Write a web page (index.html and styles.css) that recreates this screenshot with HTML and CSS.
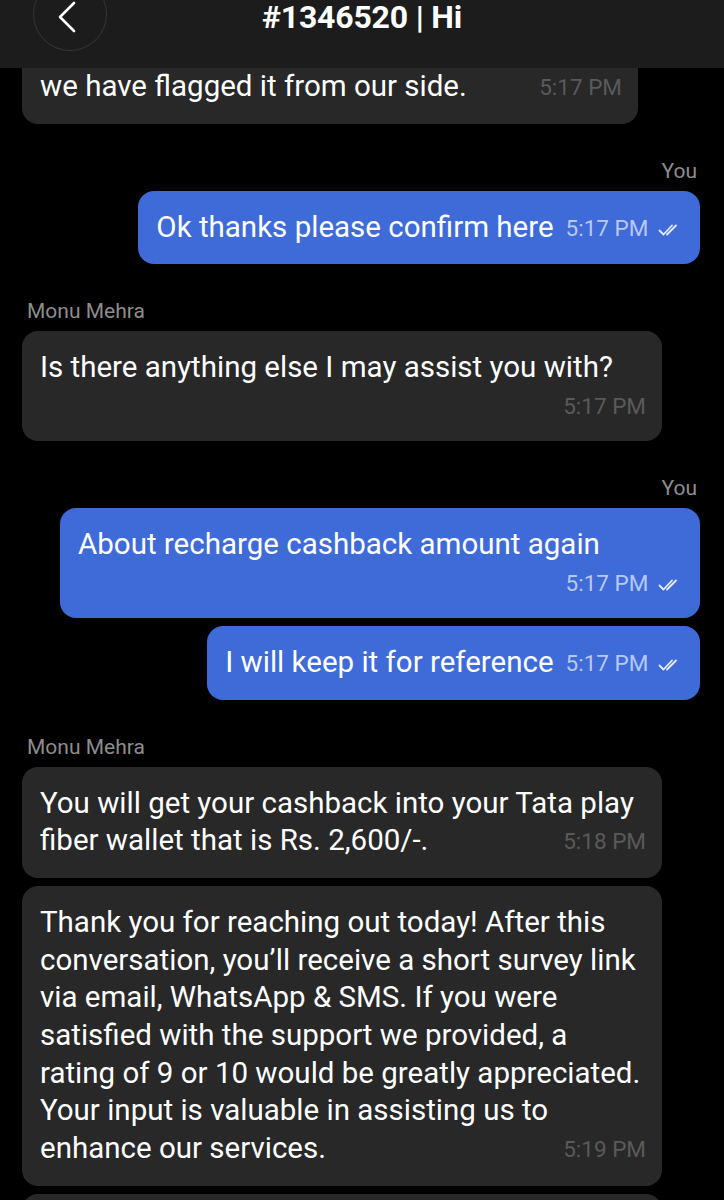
FILE: index.html
```html
<!DOCTYPE html>
<html lang="en">

<head>
    <meta charset="UTF-8">
    <meta name="viewport" content="width=device-width, initial-scale=1.0">
    <title>#1346520 | Hi</title>
    <link rel="stylesheet" href="styles.css">
</head>

<body>
    <header class="top-bar">
        <button class="back-btn" aria-label="Back">
            <svg width="20" height="32" viewBox="0 0 20 32">
                <path d="M17 2 L3 16 L17 30" fill="none" stroke="#fff" stroke-width="2.6" stroke-linecap="round" stroke-linejoin="round" />
            </svg>
        </button>
        <h1 class="title">#1346520 | Hi</h1>
    </header>

    <main class="chat">
        <div class="group group-them">
            <div class="bubble bubble-them bubble-cut">we have flagged it from our side.<span class="meta">5:17 PM</span></div>
        </div>

        <div class="group group-me">
            <div class="sender">You</div>
            <div class="bubble bubble-me">Ok thanks please confirm here<span class="meta">5:17 PM <svg class="ticks" width="24" height="14" viewBox="0 0 24 14"><path d="M1.5 7.5 L5.5 11.5 L14 2.5 M9 11.5 L18 2.5" fill="none" stroke="currentColor" stroke-width="1.8" stroke-linecap="round" stroke-linejoin="round" /></svg></span></div>
        </div>

        <div class="group group-them">
            <div class="sender">Monu Mehra</div>
            <div class="bubble bubble-them">Is there anything else I may assist you with?<span class="meta">5:17 PM</span></div>
        </div>

        <div class="group group-me">
            <div class="sender">You</div>
            <div class="bubble bubble-me">About recharge cashback amount again<span class="meta">5:17 PM <svg class="ticks" width="24" height="14" viewBox="0 0 24 14"><path d="M1.5 7.5 L5.5 11.5 L14 2.5 M9 11.5 L18 2.5" fill="none" stroke="currentColor" stroke-width="1.8" stroke-linecap="round" stroke-linejoin="round" /></svg></span></div>
            <div class="bubble bubble-me">I will keep it for reference<span class="meta">5:17 PM <svg class="ticks" width="24" height="14" viewBox="0 0 24 14"><path d="M1.5 7.5 L5.5 11.5 L14 2.5 M9 11.5 L18 2.5" fill="none" stroke="currentColor" stroke-width="1.8" stroke-linecap="round" stroke-linejoin="round" /></svg></span></div>
        </div>

        <div class="group group-them">
            <div class="sender">Monu Mehra</div>
            <div class="bubble bubble-them">You will get your cashback into your Tata play fiber wallet that is Rs. 2,600/-.<span class="meta">5:18 PM</span></div>
            <div class="bubble bubble-them">Thank you for reaching out today! After this conversation, you’ll receive a short survey link via email, WhatsApp &amp; SMS. If you were satisfied with the support we provided, a rating of 9 or 10 would be greatly appreciated. Your input is valuable in assisting us to enhance our services.<span class="meta">5:19 PM</span></div>
            <div class="bubble bubble-them">Is there anything else I may assist you with?<span class="meta">5:19 PM</span></div>
        </div>
    </main>
</body>

</html>
```

FILE: styles.css
```css
* {
    box-sizing: border-box;
}

body {
    margin: 0;
    background-color: #000;
    color: #fff;
    font-family: Roboto, "Noto Sans", sans-serif;
}

/* header sits over the scrolled messages */
.top-bar {
    position: fixed;
    top: 0;
    left: 0;
    right: 0;
    height: 68px;
    background-color: #1c1c1c;
    z-index: 2;
    overflow: hidden;
}

.back-btn {
    position: absolute;
    left: 33px;
    top: -23px;
    width: 74px;
    height: 74px;
    border-radius: 50%;
    border: 1px solid #363636;
    background: transparent;
    padding: 0;
    display: flex;
    align-items: center;
    justify-content: center;
}

.back-btn svg {
    margin-top: 6px;
    margin-left: -6px;
}

.title {
    margin: 0;
    padding-top: 2px;
    text-align: center;
    font-size: 32px;
    font-weight: 700;
    line-height: 30px;
    letter-spacing: -0.2px;
}

.chat {
    padding: 50px 24px 0 22px;
    display: flex;
    flex-direction: column;
}

.group {
    display: flex;
    flex-direction: column;
    gap: 8px;
    margin-top: 35px;
}

.group:first-child {
    margin-top: 0;
}

.group-them {
    align-items: flex-start;
}

.group-me {
    align-items: flex-end;
}

.sender {
    font-size: 21px;
    line-height: 24px;
    color: #8d8d8d;
}

.group-them .sender {
    margin-left: 5px;
}

.group-me .sender {
    margin-right: 3px;
}

.bubble {
    max-width: 640px;
    padding: 18px 16px 18px 18px;
    border-radius: 16px;
    font-size: 29.5px;
    line-height: 37.7px;
}

.bubble-them {
    background-color: #282828;
}

.bubble-cut {
    width: 616px;
}

.bubble-me {
    background-color: #3e6bd8;
    padding-right: 18px;
}

.meta {
    float: right;
    margin-left: 12px;
    padding-top: 2px;
    font-size: 22.5px;
    line-height: 34px;
    color: #5a5a5a;
    white-space: nowrap;
}

.bubble-me .meta {
    color: #b9c8f1;
}

.ticks {
    color: #e6ecfb;
    margin-left: 4px;
    vertical-align: -1px;
}
```
